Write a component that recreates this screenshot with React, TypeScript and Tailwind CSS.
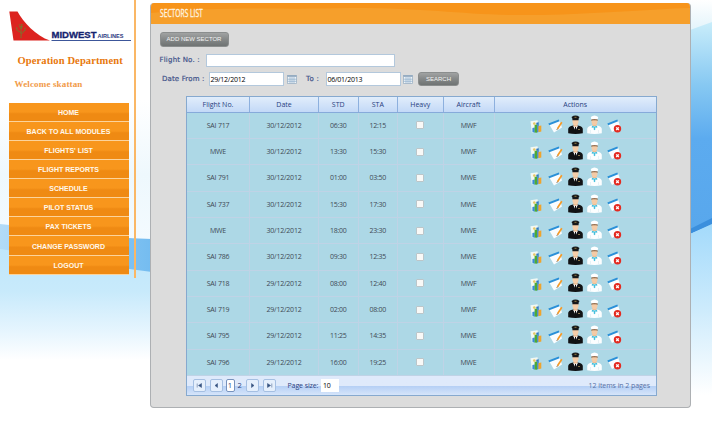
import React from "react";

const menu = ["HOME", "BACK TO ALL MODULES", "FLIGHTS' LIST", "FLIGHT REPORTS", "SCHEDULE", "PILOT STATUS", "PAX TICKETS", "CHANGE PASSWORD", "LOGOUT"];

const rows: string[][] = [
  ["SAI 717", "30/12/2012", "06:30", "12:15", "MWF"],
  ["MWE", "30/12/2012", "13:30", "15:30", "MWF"],
  ["SAI 791", "30/12/2012", "01:00", "03:50", "MWE"],
  ["SAI 737", "30/12/2012", "15:30", "17:30", "MWE"],
  ["MWE", "30/12/2012", "18:00", "23:30", "MWE"],
  ["SAI 786", "30/12/2012", "09:30", "12:35", "MWE"],
  ["SAI 718", "29/12/2012", "08:00", "12:40", "MWF"],
  ["SAI 719", "29/12/2012", "02:00", "08:00", "MWF"],
  ["SAI 795", "29/12/2012", "11:25", "14:35", "MWE"],
  ["SAI 796", "29/12/2012", "16:00", "19:25", "MWE"],
];

const cols = "grid grid-cols-[63px_69px_39.5px_39.5px_45.5px_51px_1fr]";

function Backdrop() {
  return (
    <svg className="absolute inset-0 -z-10" width="712" height="422" viewBox="0 0 712 422">
      <defs>
        <linearGradient id="haze" x1="0" y1="0" x2="0" y2="1">
          <stop offset="0" stopColor="#fff" />
          <stop offset="0.5" stopColor="#eef8fd" />
          <stop offset="1" stopColor="#f4fbff" />
        </linearGradient>
        <linearGradient id="low" x1="0" y1="0" x2="0" y2="1">
          <stop offset="0" stopColor="#bfe6fb" />
          <stop offset="0.4" stopColor="#c8eafb" />
          <stop offset="0.75" stopColor="#e6f5fe" />
          <stop offset="1" stopColor="#fff" />
        </linearGradient>
        <linearGradient id="band" x1="0" y1="0" x2="1" y2="0">
          <stop offset="0" stopColor="#b2dbf7" />
          <stop offset="1" stopColor="#74bcf0" />
        </linearGradient>
        <linearGradient id="deep" x1="0" y1="0" x2="0" y2="1">
          <stop offset="0" stopColor="#c9edfa" />
          <stop offset="0.3" stopColor="#86c8f2" />
          <stop offset="0.55" stopColor="#5cabef" />
          <stop offset="1" stopColor="#58a7ec" />
        </linearGradient>
        <linearGradient id="rlow" x1="0" y1="0" x2="0" y2="1">
          <stop offset="0" stopColor="#a3dafb" />
          <stop offset="0.5" stopColor="#cdebfc" />
          <stop offset="1" stopColor="#fff" />
        </linearGradient>
        <linearGradient id="rtop" x1="0" y1="0" x2="0" y2="1">
          <stop offset="0" stopColor="#fff" />
          <stop offset="1" stopColor="#e3f4fb" />
        </linearGradient>
      </defs>
      <rect y="100" width="150" height="150" fill="url(#haze)" />
      <path d="M0 246 C50 256 100 264 152 271 V360 H0 Z" fill="url(#low)" />
      <path d="M0 224 C50 229 100 238 152 239 V272 C100 266 50 256 0 249 Z" fill="url(#band)" />
      <rect x="690" width="22" height="30" fill="url(#rtop)" />
      <path d="M690 30 L712 22 V225 L690 234 Z" fill="url(#deep)" />
      <path d="M690 229 L712 218 V224 L690 234 Z" fill="#3b8fdd" />
      <path d="M690 234 L712 224 V395 H690 Z" fill="url(#rlow)" />
    </svg>
  );
}

function Logo() {
  return (
    <svg width="124" height="31" viewBox="0 0 124 31">
      <path d="M0.300 .5 H8.500 C14 11 27 25 41 29.500 H4.500 Z" fill="#dc231f" />
      <path d="M12 27 L12.300 13 M12.200 22 L8 19 L7.500 16 M12.200 23 L16 19 L16 16 M12.200 18 L10 13.500 M12.200 18 L14 13.500" stroke="#80702d" strokeWidth="1.300" fill="none" strokeDasharray="1.500 .6" />
      <text x="42.500" y="27" textLength="45" lengthAdjust="spacingAndGlyphs" fontFamily="Liberation Sans, sans-serif" fontWeight="700" fontSize="8.600" fill="#14236f" stroke="#14236f" strokeWidth=".3">MIDWEST</text>
      <text x="88.500" y="27" textLength="26" lengthAdjust="spacingAndGlyphs" fontFamily="Liberation Sans, sans-serif" fontWeight="700" fontSize="4.800" fill="#2a3a80">AIRLINES</text>
      <path d="M42.500 29.500 H122" stroke="#3c569a" strokeWidth="1" />
    </svg>
  );
}

function ReportIcon() {
  return (
    <svg width="12" height="13" viewBox="0 0 12 13">
      <path d="M.5 1.200 L7.500 .3 L9 11 L1.800 12.500 Z" fill="#f2f8f4" />
      <circle cx="4.300" cy="3.600" r="1.300" fill="#e6c867" />
      <path d="M2.400 8 L4.800 7.500 V12.500 L2.400 12 Z" fill="#3b8adb" />
      <path d="M4.600 5 L7.200 4.200 V12.700 L4.600 12.500 Z" fill="#4cab35" />
      <path d="M6.300 2.700 L8.700 2.300 V11.500 L7.200 12.500 V4.200 L6.300 4.500 Z" fill="#2e78c2" />
      <path d="M8.500 6 L11.300 5.500 V11.500 L8.500 12.300 Z" fill="#f0a42c" />
    </svg>
  );
}

function EditIcon() {
  return (
    <svg width="15" height="14" viewBox="0 0 15 14">
      <path d="M1 5 L11.500 1.300 L14 8.500 L6 13.500 Z" fill="#fafdff" />
      <path d="M.3 4.500 L10.800 .5 L11.600 2.300 L1.300 6.300 Z" fill="#2a90d8" />
      <path d="M13.800 3.300 L9.500 9.800" stroke="#f79a26" strokeWidth="1.700" />
      <path d="M9.700 9.500 L8.700 11" stroke="#8a6a4b" strokeWidth=".9" />
    </svg>
  );
}

function PilotIcon() {
  return (
    <svg width="15" height="19" viewBox="0 0 15 19">
      <path d="M.2 18.300 V14 Q.4 11.700 4 10.800 L7.500 10 L11 10.800 Q14.600 11.700 14.800 14 V18.300 Q7.500 19.500 .2 18.300 Z" fill="#111214" />
      <path d="M5.500 8 H9.500 V11 L7.500 13 L5.500 11 Z" fill="#eebd92" />
      <path d="M5 10.600 L7.500 12 L10 10.600 L7.900 15 H7.100 Z" fill="#fff" />
      <path d="M7 12 H8 L8.100 14.500 L7.500 15.500 L6.900 14.500 Z" fill="#111" />
      <ellipse cx="7.500" cy="6.500" rx="3" ry="3.700" fill="#f4cda9" />
      <path d="M3.500 2 Q7.500 -.8 11.500 2 L10.600 3.800 V5.300 H4.400 V3.800 Z" fill="#17181b" />
      <path d="M6.500 2.300 H8.500" stroke="#c9a850" strokeWidth=".7" />
      <path d="M10 14.500 H12" stroke="#bca163" strokeWidth=".7" />
    </svg>
  );
}

function StewardIcon() {
  return (
    <svg width="15" height="19" viewBox="0 0 15 19">
      <path d="M.2 18.300 V14 Q.4 11.700 4 10.800 L7.500 10 L11 10.800 Q14.600 11.700 14.800 14 V18.300 Q7.500 19.500 .2 18.300 Z" fill="#fcfeff" />
      <path d="M5.500 8 H9.500 V11 H5.500 Z" fill="#eebd92" />
      <path d="M5 10.800 L7.500 11.600 L10 10.800 L10.300 12.800 L8.200 12.500 L8.300 14.500 L7.500 15.300 L6.700 14.500 L6.800 12.500 L4.700 12.800 Z" fill="#45bfdc" />
      <path d="M3.500 15 V18 M11.500 15 V18" stroke="#d3e8ee" strokeWidth=".5" />
      <ellipse cx="7.500" cy="6.400" rx="3" ry="3.600" fill="#f4cba6" />
      <path d="M4.500 4.300 H10.500 V6 L9.400 5.200 H5.600 L4.500 6 Z" fill="#7a573b" />
      <path d="M3.800 2 Q7.500 -1 11.200 2 L10.700 4.300 Q7.500 3.600 4.300 4.300 Z" fill="#fff" />
    </svg>
  );
}

function DeleteIcon() {
  return (
    <svg width="15" height="14" viewBox="0 0 15 14">
      <path d="M1 5 L11 1.300 L13.500 8.500 L5 13 Z" fill="#fafdff" />
      <path d="M.3 4.500 L10.300 .5 L11.100 2.300 L1.300 6.300 Z" fill="#2a90d8" />
      <circle cx="10.500" cy="9.700" r="3.700" fill="#e32a20" />
      <path d="M9.200 8.400 L11.800 11 M11.800 8.400 L9.200 11" stroke="#fff" strokeWidth="1.300" />
    </svg>
  );
}

function CalendarIcon() {
  return (
    <svg width="10" height="9" viewBox="0 0 10 9">
      <rect x=".5" y=".5" width="9" height="8" fill="#eef4f8" stroke="#a2b5c6" strokeWidth=".8" />
      <rect x=".5" y=".3" width="9" height="1.500" fill="#8ba4bc" />
      <path d="M3 2 V8.500 M5 2 V8.500 M7 2 V8.500 M.5 4.200 H9.500 M.5 6.300 H9.500" stroke="#7fa3c4" strokeWidth=".6" />
    </svg>
  );
}

function PagerButton({ d }: { d: string }) {
  return (
    <button className="flex h-[13px] w-[13px] items-center justify-center rounded-[2px] border border-[#a5bfe2] bg-[#e5effc]">
      <svg width="7" height="7" viewBox="0 0 7 7">
        <path d={d} fill="#34517f" stroke="#34517f" strokeWidth=".5" />
      </svg>
    </button>
  );
}

const greyButton =
  "flex h-[14.500px] items-center justify-center rounded-[3px] border border-[#8b8e8e] bg-linear-to-b from-[#a1a3a3] via-[#858888] to-[#6f7373] font-['Liberation_Sans',sans-serif] text-[6px] text-[#f4f4f4]";
const label = "font-['DejaVu_Sans',sans-serif] text-[7px] text-[#43538a] whitespace-nowrap [-webkit-text-stroke:0.2px_#43538a]";
const field = "border border-[#b3c8dc] bg-white text-black";

export default function App() {
  return (
    <div className="relative isolate flex h-[422px] w-[712px] overflow-hidden bg-white font-['Open_Sans','Noto_Sans',sans-serif] leading-none">
      <Backdrop />
      <aside className="h-[278px] w-[136px] shrink-0 border-r-2 border-[#fab765] pt-[10.500px] pl-[8.500px]">
        <div className="h-[31px] pl-[0.500px]"><Logo /></div>
        <h1 className="mt-[14px] h-[10.500px] pl-[9px] font-['Liberation_Serif',serif] text-[10.500px] font-bold tracking-[0.120px] whitespace-nowrap text-[#e8780c]">Operation Department</h1>
        <p className="mt-[14px] h-[9px] pl-[6px] font-['Liberation_Serif',serif] text-[9px] font-bold tracking-[0.150px] whitespace-nowrap text-[#f19a48]">Welcome skattan</p>
        <nav className="mt-[13.500px] w-[120px]">
          {menu.map((m) => (
            <a key={m} className="flex h-[19.150px] items-center justify-center border-b border-[#fcd39b] bg-linear-to-b from-[#f8961c] from-50% to-[#ef8a13] to-60% pt-px font-['Liberation_Sans',sans-serif] text-[7px] font-bold text-[#fff8ec]">
              {m}
            </a>
          ))}
        </nav>
      </aside>

      <main className="mt-[3px] ml-[14px] h-[405px] w-[541px] shrink-0 overflow-hidden rounded-[4px] border-x border-b-[1.500px] border-[#adb0b3] bg-[#dcdcdc]">
        <header className="relative flex h-[21px] items-center bg-[#f7941a] pl-[8.500px]">
          <svg className="absolute inset-0" width="540" height="21" viewBox="0 0 540 21" preserveAspectRatio="none">
            <path d="M0 10 C70 3 130 7 200 5 C290 5 310 13 390 12 C450 11 500 6 540 5 V21 H0 Z" fill="#f69f2b" />
          </svg>
          <span className="relative inline-block origin-left scale-x-[.62] text-[10.800px] whitespace-nowrap text-[#fff5e2] [-webkit-text-stroke:0.3px_#fff5e2]">SECTORS LIST</span>
        </header>

        <section className="pt-[8px] pl-[8.500px]">
          <button className={`${greyButton} w-[69px]`}>ADD NEW SECTOR</button>
          <div className="mt-[7px] flex h-[13.500px] items-center">
            <span className={`${label} w-[46.500px] tracking-[0.200px]`}>Flight No. :</span>
            <input className={`${field} h-[13.500px] w-[189px]`} />
          </div>
          <div className="mt-[4.500px] flex h-[15px] items-center">
            <span className={`${label} w-[49px] pl-[2.500px] tracking-[0.150px]`}>Date From :</span>
            <span className={`${field} flex h-[14px] w-[75px] items-center pl-px text-[7px] tracking-[-0.250px]`}>29/12/2012</span>
            <span className="ml-[3px]"><CalendarIcon /></span>
            <span className={`${label} ml-[9.500px] w-[19.500px] tracking-[0.300px]`}>To :</span>
            <span className={`${field} flex h-[14px] w-[75px] items-center pl-px text-[7px] tracking-[-0.250px]`}>06/01/2013</span>
            <span className="ml-[2.500px]"><CalendarIcon /></span>
            <button className={`${greyButton} ml-[5px] w-[41px]`}>SEARCH</button>
          </div>
        </section>

        <section className="mt-[9px] ml-[35px] w-[471px] border border-[#86a9cf]">
          <div className={`${cols} h-[16px] border-b border-[#86aada] bg-linear-to-b from-[#e1edfb] to-[#c3d9f7] text-[7px] text-[#273e80]`}>
            {["Flight No.", "Date", "STD", "STA", "Heavy", "Aircraft", "Actions"].map((h) => (
              <div key={h} className="flex items-center justify-center border-r border-[#8db0de] last:border-r-0">{h}</div>
            ))}
          </div>
          {rows.map((r, i) => (
            <div key={i} className={`${cols} h-[26.350px] border-b border-[#bfd3e6] bg-[#add8e6] text-[7px] tracking-[-0.220px] text-[#3f4a55]`}>
              {r.slice(0, 4).map((c, j) => (
                <div key={j} className="flex items-center justify-center border-r border-[#bfd3e6]">{c}</div>
              ))}
              <div className="flex items-center justify-center border-r border-[#bfd3e6]">
                <span className="size-[8px] rounded-[1px] border border-[#bcc6c9] bg-[#f9f9f7]" />
              </div>
              <div className="flex items-center justify-center border-r border-[#bfd3e6]">{r[4]}</div>
              <div className="grid grid-cols-[repeat(5,19.600px)] items-center justify-center justify-items-center">
                <span className="pt-[2px]"><ReportIcon /></span>
                <span className="pt-[2px]"><EditIcon /></span>
                <span className="pb-[2px]"><PilotIcon /></span>
                <span className="pb-[2px]"><StewardIcon /></span>
                <span className="pt-[2px]"><DeleteIcon /></span>
              </div>
            </div>
          ))}
          <footer className="flex h-[19px] items-center bg-linear-to-b from-[#dfeafb] from-50% via-[#b6d0f5] via-55% to-[#d6e5fa] px-[6px] text-[7px] text-[#273e80]">
            <PagerButton d="M1.200 1.500 V5.500 M5.500 1.500 V5.500 L2.500 3.500 Z" />
            <span className="ml-[4px]"><PagerButton d="M4.500 1.500 V5.500 L2 3.500 Z" /></span>
            <span className="ml-[2.500px] flex h-[13px] w-[9px] items-center justify-center rounded-[2px] border border-[#7792bd] bg-white text-[7.500px]">1</span>
            <span className="ml-[3px] w-[8px] text-[7.500px]">2</span>
            <PagerButton d="M2.500 1.500 V5.500 L5 3.500 Z" />
            <span className="ml-[4px]"><PagerButton d="M5.800 1.500 V5.500 M1.500 1.500 V5.500 L4.500 3.500 Z" /></span>
            <span className="ml-[12px] w-[33.500px] tracking-[-0.100px] whitespace-nowrap">Page size:</span>
            <span className="flex h-[13px] w-[18px] items-center bg-white pl-[2px] tracking-[-0.200px] text-black">10</span>
            <span className="ml-auto tracking-[-0.060px] text-[#5771a6]">12 items in 2 pages</span>
          </footer>
        </section>
      </main>
    </div>
  );
}
